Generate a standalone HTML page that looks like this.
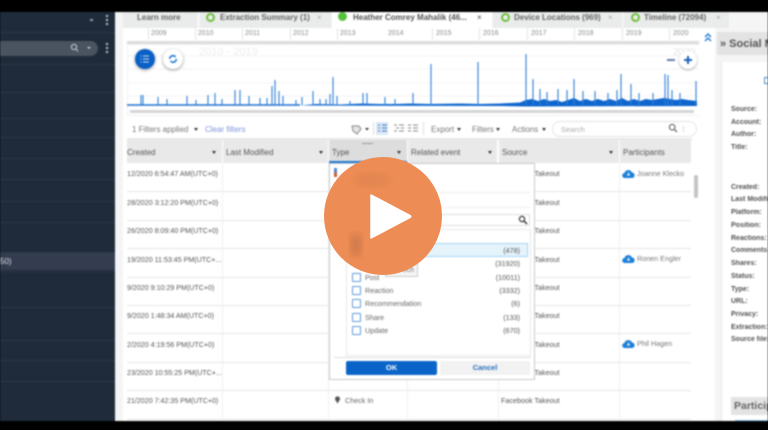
<!DOCTYPE html>
<html><head><meta charset="utf-8"><style>
html,body{margin:0;padding:0;background:#000}
#r{position:relative;width:768px;height:430px;overflow:hidden;background:#000;font-family:"Liberation Sans",sans-serif;font-size:8px;color:#666}
#c{position:absolute;left:0;top:0;width:768px;height:430px;background:#fff;filter:blur(.7px);overflow:hidden}
#c div{position:absolute;white-space:nowrap}
.h{background:#e9e9e9;top:140px;height:23px}
.ht{top:148px;font-size:8px;color:#555}
.ar{width:0;height:0;border-left:2.5px solid transparent;border-right:2.5px solid transparent;border-top:3px solid #333}
.hl{height:1px;background:#e6e6e6;left:127px;width:564px}
.vl{width:1px;background:#efefef;top:163px;height:258px}
.d{left:127px;font-size:7.1px;color:#555;margin-top:1px}
.s{left:501px;font-size:7.2px;color:#555;width:70px;overflow:hidden}
.y{top:30px;font-size:7px;color:#888}
.tk{top:28px;width:1px;height:12px;background:#e4e4e4}
.tab{top:12px;height:16px;background:#e9ecea}
.tt{top:12.500px;font-size:8px;font-weight:bold;color:#666}
.x{top:13px;font-size:8px;color:#aaa}
.ring{top:13px;width:5px;height:5px;border:2px solid #6ebf3e;border-radius:50%}
.l{left:731px;font-size:7px;color:#333;font-weight:bold;opacity:.85;margin-top:2px}
.sb{left:0;width:115px;height:1px;background:#2a3747}
.cb{left:352px;width:7px;height:7px;border:1px solid #5f9ad8;border-radius:1px;background:#fff}
.pl{left:365px;font-size:7.200px;color:#666}
.pc{width:60px;text-align:right;left:460px;font-size:7.200px;color:#555}
.tb{top:125px;font-size:8px;color:#777}
.pn{left:637px;font-size:7.200px;color:#777}
</style></head><body><div id="r"><div id="c">
<div style="left:0;top:12px;width:115px;height:409px;background:#1f2b3a"></div>
<div class="sb" style="top:32px"></div><div class="sb" style="top:64px"></div><div class="sb" style="top:92px"></div><div class="sb" style="top:118px"></div><div class="sb" style="top:137px"></div><div class="sb" style="top:158px"></div><div class="sb" style="top:179px"></div><div class="sb" style="top:201px"></div><div class="sb" style="top:222px"></div><div class="sb" style="top:252px"></div><div class="sb" style="top:271px"></div><div class="sb" style="top:307px"></div><div class="sb" style="top:340px"></div><div class="sb" style="top:360px"></div><div class="sb" style="top:381px"></div>
<div style="left:0;top:41px;width:98px;height:15px;background:#4a5360;border-radius:0 8px 8px 0"></div>
<div style="left:0;top:253px;width:115px;height:17px;background:#333d4f"></div>
<div style="left:0;top:257px;font-size:8px;color:#dde;">50)</div>
<div style="left:90px;top:19px;width:3px;height:2px;background:#99a"></div>
<div style="left:106px;top:15px;width:2px;height:10px;background:repeating-linear-gradient(#bcc 0 2px,transparent 2px 4px)"></div>
<div style="left:106px;top:43px;width:2px;height:10px;background:repeating-linear-gradient(#bcc 0 2px,transparent 2px 4px)"></div>
<svg style="position:absolute;left:69px;top:43px" width="26" height="10"><circle cx="5" cy="4" r="2.600" fill="none" stroke="#ccd" stroke-width="1"/><path d="M7 6l2 2.500" stroke="#ccd"/><path d="M18 4h4l-2 2z" fill="#ccd"/></svg>
<div style="left:115px;top:12px;width:8px;height:409px;background:#f4f5f6"></div>

<div style="left:123px;top:12px;width:645px;height:16px;background:#f5f5f5"></div>
<div class="tab" style="left:123px;width:74px"></div>
<div class="tab" style="left:200px;width:131px"></div>
<div class="tab" style="left:332px;width:160px;background:#fff"></div>
<div class="tab" style="left:493px;width:129px"></div>
<div class="tab" style="left:624px;width:105px"></div>
<div class="tt" style="left:137px">Learn more</div>
<div class="ring" style="left:206px"></div><div class="tt" style="left:220px">Extraction Summary (1)</div><div class="x" style="left:317px">×</div>
<div style="left:338px;top:12px;width:9px;height:9px;border-radius:50%;background:#55c23a"></div><div class="tt" style="left:353px;color:#555">Heather Comrey Mahalik (46...</div><div class="x" style="left:477px;color:#444">×</div>
<div class="ring" style="left:501px"></div><div class="tt" style="left:514px">Device Locations (969)</div><div class="x" style="left:608px">×</div>
<div class="ring" style="left:631px"></div><div class="tt" style="left:644px">Timeline (72094)</div><div class="x" style="left:716px">×</div>

<div class="tk" style="left:148px"></div><div class="tk" style="left:195px"></div><div class="tk" style="left:242px"></div><div class="tk" style="left:290px"></div><div class="tk" style="left:337px"></div><div class="tk" style="left:432px"></div><div class="tk" style="left:479px"></div><div class="tk" style="left:527px"></div><div class="tk" style="left:574px"></div><div class="tk" style="left:622px"></div><div class="tk" style="left:669px"></div>
<div class="y" style="left:151px">2009</div><div class="y" style="left:198px">2010</div><div class="y" style="left:245px">2011</div><div class="y" style="left:293px">2012</div><div class="y" style="left:340px">2013</div><div class="y" style="left:388px">2014</div><div class="y" style="left:436px">2015</div><div class="y" style="left:483px">2016</div><div class="y" style="left:531px">2017</div><div class="y" style="left:578px">2018</div><div class="y" style="left:626px">2019</div><div class="y" style="left:673px">2020</div>
<div style="left:127px;top:41px;width:573px;height:3px;background:#ddd"></div>
<div style="left:127px;top:44px;width:573px;height:72px;border:1px solid #f0f0f0;box-sizing:border-box"></div>
<div style="left:199px;top:46px;font-size:11px;color:#ececec">2010 - 2019</div>
<div style="left:673px;top:47px;font-size:10px;color:#e4e4e4">2020</div>
<svg style="position:absolute;left:0;top:0" width="768" height="430">
<g stroke="#f3f3f3"><path d="M127 56H700M127 69H700M127 83H700M127 96H700"/></g>
<path d="M127 105H300" stroke="#1c6fd0" stroke-width="1.400" fill="none"/>
<path d="M300 105.500L316 104 340 104.500 362 103.500 380 104 396 104 410 103.500 430 104 460 103.500 480 104 500 103.500 520 102.500 526 100 532 99 538 101 544 99 550 101 556 100 562 102 568 100 574 98 580 101 586 99 592 101 598 99 604 101 610 99 616 101 622 98 628 101 634 99 640 101 646 99 652 100 658 99 664 98 670 99 676 100 682 99 688 100 697 101V106L526 106.500 500 106Z" fill="#0e66cd"/>
<path d="M141 105V95M143 105V95M158 105V97M167 105V99M187 105V96M196 105V100M208 105V95M215 105V93M222 105V99M235 105V90M240 105V90M249 105V96M260 105V98M267 105V98M272 105V86M275 105V80M279 105V91M283 105V96M296 105V100M302 105V97M313 105V91M320 105V99M326 105V99M330 105V94M333 105V77M337 105V96M350 105V101M363 105V93M367 105V93M385 105V97M395 105V99M413 105V93M431 105V64M478 105V62M526 105V54M533 105V79M540 105V89M547 105V92M558 105V89M567 105V90M574 105V79M583 105V91M595 105V91M608 105V93M617 105V90M621 105V74M631 105V84M639 105V93M653 105V93M665 105V74M668 105V75M672 105V90M680 105V93M696 105V81" stroke="#2f7ed8" stroke-width="1.100" fill="none"/>
</svg>
<div style="left:130px;top:110px;width:564px;height:3px;background:#d5d5d5"></div>

<div style="left:135px;top:49px;width:20px;height:20px;border-radius:50%;background:#0a60c6;box-shadow:0 1px 3px #999"></div>
<svg style="position:absolute;left:140px;top:54px" width="10" height="10"><path d="M3 2h6M3 5h6M3 8h6" stroke="#cde" stroke-width="1"/><path d="M.5 2h1M.5 5h1M.5 8h1" stroke="#cde"/></svg>
<div style="left:163px;top:49px;width:20px;height:20px;border-radius:50%;background:#fff;box-shadow:0 1px 3px #999"></div>
<svg style="position:absolute;left:168px;top:54px" width="10" height="10"><circle cx="5" cy="5" r="3.300" fill="none" stroke="#1a78d0" stroke-width="1.600" stroke-dasharray="8 2.400"/></svg>
<div style="left:667px;top:59px;width:8px;height:2px;background:#5f7fa8"></div>
<div style="left:679px;top:51px;width:18px;height:18px;border-radius:50%;background:#fff;box-shadow:0 1px 2px #aaa"></div>
<div style="left:684px;top:59px;width:8px;height:2px;background:#1a60b8"></div><div style="left:687px;top:56px;width:2px;height:8px;background:#1a60b8"></div>

<div class="tb" style="left:132px">1 Filters applied</div><div class="ar" style="left:194px;top:128px"></div>
<div class="tb" style="left:205px;color:#7f93dc">Clear filters</div>
<svg style="position:absolute;left:351px;top:124px" width="28" height="11"><path d="M1 2h7l2 3-4 5-4-3z" fill="#e4e4e4" stroke="#888"/><path d="M14 4h4l-2 2.500z" fill="#333"/></svg>
<div style="left:373px;top:122px;width:1px;height:13px;background:#ddd"></div>
<div style="left:376px;top:122px;width:12px;height:13px;background:#dce9f6"></div>
<svg style="position:absolute;left:377px;top:123px" width="42" height="12"><g stroke="#3878c0" stroke-width="1"><path d="M1 2h2M5 2h5M1 5h2M5 5h5M1 8h2M5 8h5"/></g><g stroke="#888" stroke-width="1"><path d="M17 2h3M22 2h5M19 5h3M24 5h3M17 8h3M22 8h5M31 2h3M36 2h5M31 5h3M36 5h5M31 8h3M36 8h5"/></g></svg>
<div style="left:423px;top:122px;width:1px;height:13px;background:#ddd"></div>
<div class="tb" style="left:431px">Export</div><div class="ar" style="left:457px;top:128px"></div>
<div class="tb" style="left:472px">Filters</div><div class="ar" style="left:496px;top:128px"></div>
<div class="tb" style="left:512px">Actions</div><div class="ar" style="left:542px;top:128px"></div>
<div style="left:552px;top:121px;width:145px;height:16px;border:1px solid #e4e4e4;border-radius:8px;box-sizing:border-box"></div>
<div style="left:561px;top:125px;font-size:7.500px;color:#aaa">Search</div>
<svg style="position:absolute;left:668px;top:123px" width="10" height="10"><circle cx="4.200" cy="4.200" r="2.800" fill="none" stroke="#555"/><path d="M6.500 6.500L9 9" stroke="#555" stroke-width="1.200"/></svg>
<div style="left:683px;top:126px;width:1px;height:6px;background:#ddd"></div>
<div style="left:127px;top:138px;width:565px;height:2px;background:#e8e8e8"></div>

<div class="h" style="left:127px;width:95px"></div><div class="h" style="left:223px;width:105px"></div><div class="h" style="left:329px;width:78px;background:#ddd"></div><div class="h" style="left:408px;width:89px"></div><div class="h" style="left:499px;width:120px"></div><div class="h" style="left:620px;width:71px"></div>
<div style="left:329px;top:161px;width:78px;height:2px;background:#1f78d1"></div>
<div style="left:362px;top:143px;width:11px;height:1px;background:#999"></div>
<div class="ht" style="left:127px">Created</div><div class="ar" style="left:212px;top:151px"></div>
<div class="ht" style="left:226px">Last Modified</div><div class="ar" style="left:319px;top:151px"></div>
<div class="ht" style="left:332px">Type</div><div class="ar" style="left:397px;top:151px"></div>
<div class="ht" style="left:411px">Related event</div><div class="ar" style="left:488px;top:151px"></div>
<div class="ht" style="left:502px">Source</div><div class="ar" style="left:609px;top:151px"></div>
<div class="ht" style="left:623px">Participants</div>

<div class="hl" style="top:191px"></div><div class="hl" style="top:220px"></div><div class="hl" style="top:248px"></div><div class="hl" style="top:277px"></div><div class="hl" style="top:333px"></div><div class="hl" style="top:305px"></div><div class="hl" style="top:362px"></div><div class="hl" style="top:390px"></div><div class="hl" style="top:419px"></div>
<div class="vl" style="left:222px"></div><div class="vl" style="left:328px"></div><div class="vl" style="left:407px"></div><div class="vl" style="left:498px"></div><div class="vl" style="left:619px"></div>

<div class="d" style="top:169px">12/2020 6:54:47 AM(UTC+0)</div>
<div class="d" style="top:198px">28/2020 3:12:20 PM(UTC+0)</div>
<div class="d" style="top:226px">26/2020 8:09:40 PM(UTC+0)</div>
<div class="d" style="top:255px">19/2020 11:53:45 PM(UTC+...</div>
<div class="d" style="top:283px">9/2020 9:10:29 PM(UTC+0)</div>
<div class="d" style="top:311px">9/2020 1:48:34 AM(UTC+0)</div>
<div class="d" style="top:340px">2/2020 4:19:56 PM(UTC+0)</div>
<div class="d" style="top:368px">23/2020 10:55:25 PM(UTC+...</div>
<div class="d" style="top:396px">21/2020 7:42:35 PM(UTC+0)</div>
<svg style="position:absolute;left:334px;top:396px" width="7" height="8"><path d="M3.500 7.500L1.200 3.800a2.500 2.500 0 1 1 4.600 0z" fill="#555"/></svg>
<div style="left:345px;top:396px;font-size:7.200px;color:#666">Check In</div>

<div class="s" style="top:169px">Facebook Takeout</div><div class="s" style="top:198px">Facebook Takeout</div><div class="s" style="top:226px">Facebook Takeout</div><div class="s" style="top:255px">Facebook Takeout</div><div class="s" style="top:283px">Facebook Takeout</div><div class="s" style="top:311px">Facebook Takeout</div><div class="s" style="top:340px">Facebook Takeout</div><div class="s" style="top:368px">Facebook Takeout</div><div class="s" style="top:396px">Facebook Takeout</div>

<svg style="position:absolute;left:622px;top:168px" width="13" height="11"><path d="M3 10a2.500 2.500 0 0 1-.5-5A4 4 0 0 1 10 4.500a2.800 2.800 0 0 1 .5 5.500z" fill="#1b7fd8"/><path d="M6.500 4.500v3M5 7h3" stroke="#fff"/></svg>
<div class="pn" style="top:169px">Joanne Klecko</div>
<svg style="position:absolute;left:622px;top:253px" width="13" height="11"><path d="M3 10a2.500 2.500 0 0 1-.5-5A4 4 0 0 1 10 4.500a2.800 2.800 0 0 1 .5 5.500z" fill="#1b7fd8"/><path d="M6.500 4.500v3M5 7h3" stroke="#fff"/></svg>
<div class="pn" style="top:254px">Ronen Engler</div>
<svg style="position:absolute;left:622px;top:338px" width="13" height="11"><path d="M3 10a2.500 2.500 0 0 1-.5-5A4 4 0 0 1 10 4.500a2.800 2.800 0 0 1 .5 5.500z" fill="#1b7fd8"/><path d="M6.500 4.500v3M5 7h3" stroke="#fff"/></svg>
<div class="pn" style="top:339px">Phil Hagen</div>
<div style="left:694px;top:175px;width:4px;height:23px;background:#c4c4c4;border-radius:2px"></div>

<div style="left:329px;top:163px;width:206px;height:217px;background:#fff;border:1px solid #c9c9c9;box-sizing:border-box"></div>
<div style="left:338px;top:192px;width:192px;height:1px;background:#eee"></div>
<div style="left:338px;top:207px;width:192px;height:1px;background:#eee"></div>
<div style="left:334px;top:168px;width:3px;height:9px;background:linear-gradient(#4a8bd0 50%,#d05a30 50%)"></div>
<div style="left:340px;top:214px;width:190px;height:12px;border:1px solid #ddd;box-sizing:border-box"></div>
<svg style="position:absolute;left:518px;top:215px" width="10" height="10"><circle cx="4" cy="4" r="2.600" fill="none" stroke="#333" stroke-width="1.200"/><path d="M6 6l3 3" stroke="#333" stroke-width="1.500"/></svg>
<div style="left:346px;top:229px;width:185px;height:127px;border:1px solid #e8e8e8;box-sizing:border-box"></div>
<div style="left:346px;top:243px;width:182px;height:14px;background:#e5f3fb;border:1px solid #a5d5f0;box-sizing:border-box"></div>
<div style="left:385px;top:263px;width:33px;height:14px;background:#f4f4f4;border:1px solid #ccc;box-sizing:border-box;font-size:7px;color:#777;text-align:right;padding:3px 3px 0 0">ech</div>
<div class="cb" style="top:273px"></div><div class="cb" style="top:286px"></div><div class="cb" style="top:299px"></div><div class="cb" style="top:313px"></div><div class="cb" style="top:326px"></div>
<div class="pl" style="top:273px">Post</div><div class="pl" style="top:286px">Reaction</div><div class="pl" style="top:299px">Recommendation</div><div class="pl" style="top:313px">Share</div><div class="pl" style="top:326px">Update</div>
<div class="pc" style="top:246px">(478)</div><div class="pc" style="top:259px">(31920)</div><div class="pc" style="top:273px">(10011)</div><div class="pc" style="top:286px">(3332)</div><div class="pc" style="top:299px">(6)</div><div class="pc" style="top:313px">(133)</div><div class="pc" style="top:326px">(670)</div>
<div style="left:334px;top:357px;width:197px;height:1px;background:#ddd"></div>
<div style="left:346px;top:361px;width:91px;height:14px;background:#0a64c8;border-radius:2px;color:#fff;font-size:7.500px;font-weight:bold;text-align:center;line-height:14px">OK</div>
<div style="left:440px;top:361px;width:90px;height:14px;background:#f2f2f2;border-radius:2px;color:#2a70c0;font-size:7.500px;font-weight:bold;text-align:center;line-height:14px">Cancel</div>

<div style="left:699px;top:28px;width:18px;height:393px;background:#fff"></div>
<svg style="position:absolute;left:703px;top:32px" width="10" height="10"><path d="M2 5l3-3 3 3M2 9l3-3 3 3" fill="none" stroke="#1a78d0" stroke-width="1.400"/></svg>
<div style="left:715px;top:28px;width:53px;height:393px;background:#f5f5f5"></div>
<div style="left:717px;top:32px;width:51px;height:23px;background:#e3e3e3"></div>
<div style="left:720px;top:38px;font-size:11px;font-weight:bold;color:#555">» Social M</div>
<div style="left:721px;top:62px;width:47px;height:359px;background:#fff;border-left:1px solid #e8e8e8"></div>
<div style="left:764px;top:77px;width:3px;height:5px;border:1px solid #4a90d0"></div>
<div class="l" style="top:104px">Source:</div><div class="l" style="top:117px">Account:</div><div class="l" style="top:129px">Author:</div><div class="l" style="top:142px">Title:</div>
<div class="l" style="top:182px">Created:</div><div class="l" style="top:194px">Last Modifi</div><div class="l" style="top:207px">Platform:</div><div class="l" style="top:220px">Position:</div><div class="l" style="top:233px">Reactions:</div><div class="l" style="top:245px">Comments</div><div class="l" style="top:258px">Shares:</div><div class="l" style="top:271px">Status:</div><div class="l" style="top:284px">Type:</div><div class="l" style="top:296px">URL:</div><div class="l" style="top:309px">Privacy:</div><div class="l" style="top:322px">Extraction:</div><div class="l" style="top:334px">Source file:</div>
<div style="left:731px;top:397px;width:37px;height:18px;background:#e3e3e3;font-size:10.500px;font-weight:bold;color:#666;line-height:18px;padding-left:3px;box-sizing:border-box;overflow:hidden">Participants</div>
<div style="left:735px;top:420px;width:33px;height:1px;background:#8cc8ee"></div>

<div style="left:0;top:0;width:768px;height:12px;background:#000"></div>
<div style="left:0;top:421px;width:768px;height:9px;background:#000"></div>
</div>
<svg style="position:absolute;left:0;top:0" width="768" height="430">
<defs><filter id="b"><feGaussianBlur stdDeviation="4"/></filter></defs>
<circle cx="383" cy="216" r="59" fill="#ed8c54"/>
<ellipse cx="356" cy="245" rx="6" ry="12" fill="#c9764a" filter="url(#b)" opacity=".8"/>
<ellipse cx="372" cy="180" rx="18" ry="7" fill="#dc8150" filter="url(#b)" opacity=".6"/>
<path d="M371 195L410 215.500Q411.500 216.500 410 217.500L371 238Z" fill="#fff" stroke="#fff" stroke-width="1.500" stroke-linejoin="round"/>
</svg>
</div></body></html>
